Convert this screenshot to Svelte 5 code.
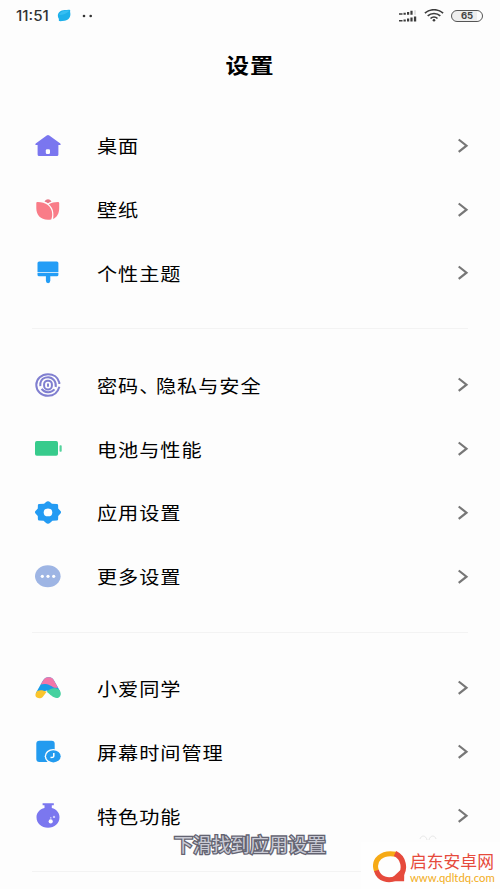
<script lang="ts">
    type Item = { icon: string; label: string };

    const groups: Item[][] = [
        [
            { icon: 'home', label: '桌面' },
            { icon: 'tulip', label: '壁纸' },
            { icon: 'brush', label: '个性主题' }
        ],
        [
            { icon: 'fingerprint', label: '密码、隐私与安全' },
            { icon: 'battery', label: '电池与性能' },
            { icon: 'gear', label: '应用设置' },
            { icon: 'more', label: '更多设置' }
        ],
        [
            { icon: 'assistant', label: '小爱同学' },
            { icon: 'screentime', label: '屏幕时间管理' },
            { icon: 'flask', label: '特色功能' }
        ]
    ];
</script>

<div class="screen">
    <header class="status">
        <span class="time">11:51</span>
        <svg class="bubble" width="14" height="13" viewBox="0 0 14 13">
            <path d="M7.500 1C9.500 1 12 .3 13 .9c.6.5-.2 1.600.2 2.600C14.200 8 11.500 11.500 7.500 11.700c-2 .1-4.200.7-5.400.3-.7-.4.1-1.500-.4-2.500C-.8 5.500 2.500 1.200 7.500 1z" fill="#1eb0ea"/>
            <path d="M2 6C4 2 8 1.300 12.500 1.700 10 4.500 6 6 2 6z" fill="#36bef2"/>
        </svg>
        <svg class="dots" width="12" height="4" viewBox="0 0 12 4">
            <circle cx="2" cy="2" r="1.300" fill="#333"/>
            <circle cx="8.700" cy="2" r="1.300" fill="#333"/>
        </svg>
        <div class="indicators">
            <svg width="20" height="14" viewBox="0 0 20 14" fill="#3c3c3c">
                <path d="M0 4.200h3.500v1.600H0zM4.500 3.700h2.300v2.100H4.500zM8 2.900h2.200v2.900H8zM11.400 1.800h2.200v4h-2.200zM0 10.900h3.500v1.600H0zM4.500 10.400h2.300v2.100H4.500zM8 9.500h2.200v3H8zM11.400 8.500h2.200v4h-2.200zM14.900 7.400h2.300v5.100h-2.300z"/>
                <path d="M15.300 1.200h1.400v4.600h-1.400z" fill="#d4d4d4"/>
            </svg>
            <svg class="wifi" width="20" height="13" viewBox="0 0 20 13" fill="none" stroke="#3c3c3c" stroke-width="1.700">
                <path d="M.9 4.200C6 -.4 14 -.4 19.100 4.200M3.700 6.900c3.500-3.200 9.100-3.200 12.600 0M6.500 9.500c2-1.900 5-1.900 7 0"/>
                <circle cx="10" cy="11.200" r="1.300" fill="#3c3c3c" stroke="none"/>
            </svg>
            <span class="level">65</span>
        </div>
    </header>

    <h1>设置</h1>

    <main>
        {#each groups as group}
            <section>
                {#each group as item}
                    <div class="row">
                        <svg class="icon" width="28" height="28" viewBox="0 0 28 28">
                            {#if item.icon === 'home'}
                                <path d="M15.300 3.400 26.300 11.600q1.200 1.500-.4 1.500H24.400V22.600q0 1.500-1.500 1.500H5.100q-1.500 0-1.500-1.500V13.100H2.100q-1.600 0-.4-1.500L12.700 3.400q1.300-1 2.600 0z" fill="#7a76ef"/>
                                <rect x="11.800" y="17.200" width="4.200" height="4.800" rx="1.200" fill="#fff"/>
                            {:else if item.icon === 'tulip'}
                                <path d="M10.500 5.500c1-1.300 2.300-2.200 3.500-2.200s2.500.9 3.500 2.200c-1.200.4-2.500 1-3.500 1.700-1-.7-2.200-1.300-3.500-1.700z" fill="#e77786"/>
                                <path d="M3.300 5.900C11 5.700 18.200 10 18.200 18c0 2-.3 4-1 5.400-1 .2-2.200.3-3.300.3C6.500 23.700 2.300 18.800 2.300 12V7q0-1 1-1.100z" fill="#f97c88"/>
                                <path d="M14.800 8.200c2.700-1.600 5.700-2.300 9.200-2.300q1.200 0 1.200 1.100v5c0 5.500-2.100 9.200-6.100 10.900.9-6.400 0-11.100-4.300-14.700z" fill="#f97c88"/>
                            {:else if item.icon === 'brush'}
                                <path d="M5.200 2.500h17.600q1.600 0 1.600 1.600V13H3.500V4.100q0-1.600 1.700-1.600z" fill="#239df6"/>
                                <path d="M3.500 13.700h20.900v2q0 1.500-1.500 1.500H16.300v4.600q0 2.400-2.200 2.400t-2.200-2.400V17.200H5q-1.500 0-1.500-1.500z" fill="#239df6"/>
                            {:else if item.icon === 'fingerprint'}
                                <g fill="none" stroke="#807fd0" stroke-width="2">
                                    <path d="M25.400 15.800C23.700 22 19 24.800 14 24.800 7.500 24.800 2.300 20 2.300 14S7.500 3.200 14 3.200c5.400 0 10 3.200 11.300 8.200v1.500"/>
                                    <path d="M6.300 15.200C5.300 5.500 16 4 20 9.200c1.700 2 2.100 4.300 1.700 6.800M20.500 18.400C17 22.400 10.500 22 7.600 17.900"/>
                                    <rect x="10.100" y="9.700" width="7.800" height="8.700" rx="3.600"/>
                                    <path d="M14 12.500v3.200"/>
                                </g>
                            {:else if item.icon === 'battery'}
                                <rect x="1" y="6.100" width="23" height="14.700" rx="1.800" fill="#37cb8c"/>
                                <rect x="25.500" y="10.200" width="2.200" height="6.600" rx=".8" fill="#54d39d"/>
                            {:else if item.icon === 'gear'}
                                <path d="M14 2.200q1.200 0 2.200 1.100l1.700 1.500 5 .1q1.100.1 1.200 1.200l.1 3.400 2.300 2.500q1.100 1.200 0 2.400l-2.300 2.500-.1 3.400q-.1 1.200-1.200 1.300l-4.500.2-2.200 1.900q-2.200 2-4.400 0l-2.200-1.900-4.500-.2q-1.100-.1-1.200-1.300l-.1-3.400-2.300-2.500q-1.100-1.200 0-2.400l2.300-2.500.1-3.400q.1-1.100 1.200-1.200l5-.1 1.700-1.500q1-1.100 2.200-1.100z" fill="#239bf3"/>
                                <ellipse cx="14" cy="13.400" rx="4.300" ry="3.900" fill="#fff"/>
                            {:else if item.icon === 'more'}
                                <ellipse cx="13.800" cy="13.200" rx="12.800" ry="11" fill="#9eb5e4"/>
                                <g fill="#fff">
                                    <circle cx="8.300" cy="13.300" r="1.600"/>
                                    <circle cx="14" cy="13.300" r="1.600"/>
                                    <circle cx="19.700" cy="13.300" r="1.600"/>
                                </g>
                            {:else if item.icon === 'assistant'}
                                <path d="M1.600 19.500 8.500 7.200C10.500 4.300 12 3.300 14 3.300h1.200c2 0 3.500 1 4.800 3.200l6 10.500-9 3-4-3.500z" fill="#199be8"/>
                                <path d="M6.700 10.600 8.800 7C10.600 4.200 12 3.300 14 3.300h1.200c2 0 3.600 1 4.800 3.200l4 7.200C19 14.800 17 10.300 11.500 9.900c-1.800-.1-3.300.1-4.800.7z" fill="#f276a9"/>
                                <path d="M2.900 17.200c2.600-1.500 6-1.300 9.800.6L8.900 22.700c-1.700 2-4.500 1.900-6 .9-1.600-1-1.900-3-1-4.400z" fill="#fbc52c"/>
                                <path d="M12.700 17.800c3-3.200 6.500-4.200 10-3.200 4.600 1.400 5.400 6.800 2.100 8.900-4.200 2-8-2.400-12.100-5.700z" fill="#46d19f"/>
                            {:else if item.icon === 'screentime'}
                                <rect x="2.300" y="2.700" width="18.400" height="21.300" rx="3" fill="#239bef"/>
                                <ellipse cx="19.200" cy="18.300" rx="8.500" ry="7.400" fill="#fdfdfd"/>
                                <ellipse cx="19.400" cy="18.300" rx="7.300" ry="6.100" fill="#239bef"/>
                                <path d="M19.800 15v3q0 1-1 1.200l-2.300.3" fill="none" stroke="#fff" stroke-width="1.500"/>
                            {:else}
                                <path d="M8.600 1.300h11.200v2h-2v2.800C22.500 7.300 25.500 11 25.500 15.200c0 6-5 10.500-11.500 10.500S2.500 21.200 2.500 15.200c0-4.200 3-7.900 8-9.100V3.300H8.600z" fill="#7b77ef"/>
                                <circle cx="16.700" cy="19.400" r="2.100" fill="#fff"/>
                                <circle cx="20" cy="14.900" r="1.200" fill="#cfcdfb"/>
                                <circle cx="16.800" cy="15.900" r=".8" fill="#cfcdfb"/>
                            {/if}
                        </svg>
                        <span class="label">
                            {#each item.label as char}<span class:comma={char === '、'}>{char}</span>{/each}
                        </span>
                        <svg class="chevron" width="12" height="16" viewBox="0 0 12 16">
                            <path d="M1.700 1.500 9.500 7.700l-7.800 6.200" fill="none" stroke="#777" stroke-width="2.200"/>
                        </svg>
                    </div>
                {/each}
            </section>
            <hr/>
        {/each}
    </main>

    <p class="caption">下滑找到应用设置</p>

    <div class="watermark">
        <svg class="arcs" width="18" height="8" viewBox="0 0 18 8">
            <path d="M1 5c1-4 6-4 7 1M10 6c1-5 6-5 7-1" fill="none" stroke="#e7e7e7"/>
        </svg>
        <svg class="logo" width="34" height="34" viewBox="0 0 34 34" fill="none" stroke-width="5">
            <path d="M3.500 21C-.5 10 9 1.500 23 4.300" stroke="#f6aa16"/>
            <path d="M22 3.600C31.500 8 31.500 19 28.700 23.500" stroke="#e64a3c" stroke-width="5.500"/>
            <path d="M3.400 20.500C6 29.500 15.500 31.500 23 28.200" stroke="#e64a3c"/>
            <path d="M27 20.500l4.300.5-.2 10.300-9.600-.1-2.500-3.200z" fill="#e64a3c"/>
        </svg>
        <div class="site">
            <strong>启东安卓网</strong>
            <span>www.qdltdq.com</span>
        </div>
    </div>
</div>

<style>
    :global(body) {
        margin: 0;
        background: #fdfdfd;
    }

    .screen {
        position: relative;
        width: 500px;
        height: 889px;
        overflow: hidden;
        background: #fdfdfd;
        color: #111;
        font-family: "Noto Sans CJK SC", sans-serif;
    }

    .status {
        display: flex;
        align-items: center;
        height: 31px;
        padding: 0 17px 0 16px;
        font-family: Inter, sans-serif;
    }

    .time {
        width: 41px;
        font-size: 14px;
        font-weight: 500;
        color: #333;
        white-space: nowrap;
        transform: scaleX(1.08);
        transform-origin: left;
    }

    .dots {
        margin-left: 11px;
    }

    .indicators {
        display: flex;
        align-items: center;
        margin-left: auto;
    }

    .wifi {
        margin: 0 7px 0 5px;
    }

    .level {
        box-sizing: border-box;
        width: 32px;
        height: 12px;
        border: 1.5px solid #555;
        border-radius: 6px;
        background: linear-gradient(90deg, #eee 82%, #fdfdfd 82%);
        font-size: 9.500px;
        font-weight: 700;
        line-height: 10px;
        text-align: center;
        color: #444;
    }

    h1 {
        height: 66px;
        margin: 0 0 17px;
        font-size: 21px;
        font-weight: 700;
        line-height: 66px;
        text-align: center;
        letter-spacing: 0.8px;
        color: #000;
        transform: scaleX(1.12);
    }

    .row {
        display: flex;
        align-items: center;
        height: 63.8px;
        padding: 0 31px 0 34px;
    }

    .icon {
        flex: none;
        margin-right: 35px;
    }

    .label {
        flex: 1;
        padding-bottom: 1px;
        font-size: 18px;
        line-height: 26px;
        letter-spacing: 0.85px;
        white-space: nowrap;
        color: #000;
        transform: scaleX(1.12);
        transform-origin: left;
    }

    /* the enumeration comma takes less than a full square */
    .comma {
        margin-right: 5px;
        font-feature-settings: "halt";
    }

    .chevron {
        flex: none;
    }

    hr {
        height: 1px;
        margin: 23px 32px 24px;
        border: none;
        background: #f3f3f3;
    }

    .caption {
        position: absolute;
        left: 174px;
        top: 830px;
        margin: 0;
        font-size: 19px;
        font-weight: 400;
        line-height: 28px;
        white-space: nowrap;
        color: #c9cad4;
        -webkit-text-stroke: 2.600px #636371;
        paint-order: stroke fill;
    }

    .watermark {
        position: absolute;
        right: 0;
        bottom: 0;
        display: flex;
        box-sizing: border-box;
        width: 139px;
        height: 47px;
        padding: 8px 0 0 12px;
        background: #fefefe;
    }

    .arcs {
        position: absolute;
        left: 58px;
        top: -8px;
    }

    .logo {
        flex: none;
    }

    .site {
        display: flex;
        flex-direction: column;
        margin: 1px 0 0 3px;
        white-space: nowrap;
    }

    .site strong {
        height: 20px;
        font-size: 16.800px;
        font-weight: 400;
        line-height: 20px;
        color: #e64a3c;
    }

    .site span {
        height: 15px;
        font-family: Lato, sans-serif;
        font-size: 11.300px;
        line-height: 14px;
        color: #f2ad22;
    }
</style>
